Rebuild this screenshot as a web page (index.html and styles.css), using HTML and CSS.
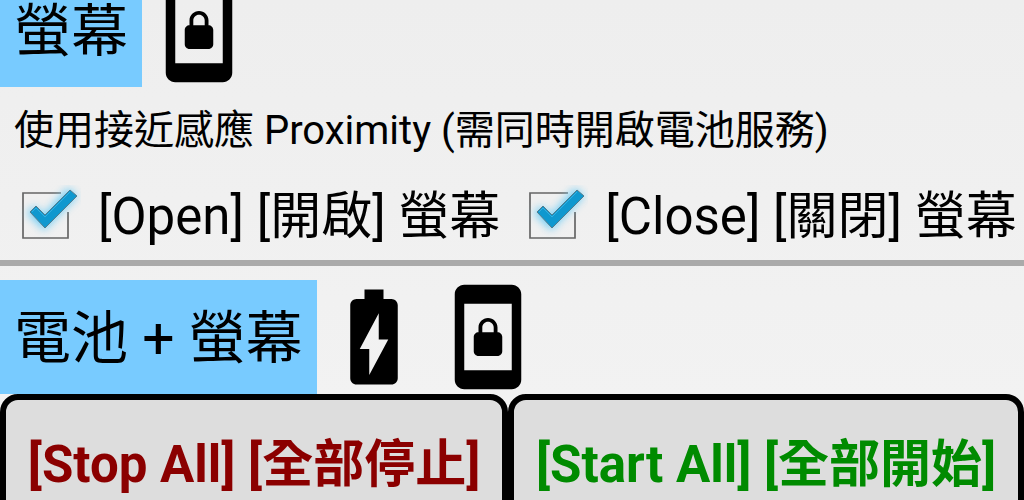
FILE: index.html
```html
<!DOCTYPE html>
<html lang="zh-Hant">
<head>
<meta charset="utf-8">
<meta name="viewport" content="width=device-width, initial-scale=1">
<title>電池 + 螢幕</title>
<link rel="stylesheet" href="styles.css">
</head>
<body>
<svg class="symbols" aria-hidden="true">
  <symbol id="phone-lock" viewBox="0 0 24 24">
    <path d="M17 1H7C5.900 1 5 1.900 5 3v18c0 1.100.9 2 2 2h10c1.100 0 2-.9 2-2V3c0-1.100-.9-2-2-2zm0 18H7V5h10v14z"/>
    <path d="M10 16h4c.55 0 1-.45 1-1v-3c0-.55-.45-1-1-1v-1c0-1.110-.9-2-2-2s-2 .9-2 2v1c-.55 0-1 .45-1 1v3c0 .55.45 1 1 1zm.8-6c0-.66.54-1.200 1.200-1.200s1.200.54 1.200 1.200v1h-2.400v-1z"/>
  </symbol>
  <symbol id="battery" viewBox="0 0 24 24">
    <path d="M15.670 4H14V2h-4v2H8.330C7.600 4 7 4.600 7 5.330v15.330C7 21.400 7.600 22 8.330 22h7.330c.74 0 1.340-.6 1.340-1.330V5.330C17 4.600 16.400 4 15.670 4zM11 20v-5.500H9L13 7v5.500h2L11 20z"/>
  </symbol>
  <symbol id="tick" viewBox="0 0 64 64">
    <path d="M44 8H6v45h45V27" fill="none" stroke="#666" stroke-width="1.700"/>
    <path class="tick-glow" d="M12 28l5-5 10 9L51 5l7 6-31 32z"/>
    <path d="M13 27l6-6 9 9L53 5l7 6-32 32z" fill="#0f98cf" stroke="#557c8c" stroke-width="1"/>
    <path d="M15 27l4-4 9 9L53 7" fill="none" stroke="#35aede" stroke-width="1"/>
  </symbol>
</svg>
<main class="page">
  <header class="section-head">
    <h2 class="title">螢幕</h2>
    <svg class="icon" aria-hidden="true"><use href="#phone-lock"/></svg>
  </header>
  <p class="note">使用接近感應 Proximity (需同時開啟電池服務)</p>
  <div class="options">
    <label class="option">
      <span class="check"><input class="check-input" type="checkbox" checked><svg class="check-mark" aria-hidden="true"><use href="#tick"/></svg></span>
      <span>[Open] [開啟] 螢幕</span>
    </label>
    <label class="option">
      <span class="check"><input class="check-input" type="checkbox" checked><svg class="check-mark" aria-hidden="true"><use href="#tick"/></svg></span>
      <span>[Close] [關閉] 螢幕</span>
    </label>
  </div>
  <hr class="divider">
  <section>
    <header class="section-head">
      <h2 class="title">電池 + 螢幕</h2>
      <svg class="icon" aria-hidden="true"><use href="#battery"/></svg>
      <svg class="icon" aria-hidden="true"><use href="#phone-lock"/></svg>
    </header>
    <div class="actions">
      <button class="action action-stop" type="button">[Stop All] [全部停止]</button>
      <button class="action action-start" type="button">[Start All] [全部開始]</button>
    </div>
  </section>
</main>
</body>
</html>
```

FILE: styles.css
```css
* {
  box-sizing: border-box;
}

body {
  margin: 0;
  overflow: hidden;
  background: linear-gradient(#eee, #f3f3f3);
  background-attachment: fixed;
  color: #000;
  font-family: Roboto, "Noto Sans CJK TC", sans-serif;
}

.symbols {
  display: none;
}

/* The list is scrolled part of the way through its first heading. */
.page {
  margin-top: -27px;
}

.section-head {
  display: flex;
  align-items: center;
}

.title {
  margin: 0;
  padding: 4px 14px 0;
  background: #78cbff;
  font-size: 57px;
  font-weight: 400;
  line-height: 110px;
  white-space: nowrap;
}

.icon {
  width: 114px;
  height: 114px;
}

.note {
  margin: 0;
  padding: 14px 14px 18px;
  font-size: 40px;
  line-height: 60px;
  white-space: nowrap;
}

.options {
  display: flex;
  gap: 7px;
  padding-bottom: 5px;
}

.option {
  display: flex;
  align-items: center;
  font-size: 51px;
  line-height: 76px;
  white-space: nowrap;
}

.check {
  display: grid;
  margin: 0 17px;
}

.check-input,
.check-mark {
  grid-area: 1 / 1;
  width: 64px;
  height: 64px;
  margin: 0;
}

.check-input {
  appearance: none;
}

.check-mark {
  overflow: visible;
  pointer-events: none;
}

.tick-glow {
  fill: #6fcdf5;
  stroke: #6fcdf5;
  stroke-width: 3px;
  filter: blur(4px);
}

.divider {
  height: 6px;
  margin: 0 0 14px;
  border: 0;
  background: #aaa;
}

.actions {
  display: flex;
}

.action {
  flex: 1 1 auto;
  padding: 32px 16px;
  border: 6px solid #000;
  border-radius: 18px;
  background: #ddd;
  font: inherit;
  font-size: 51px;
  font-weight: 700;
  line-height: 66px;
  white-space: nowrap;
}

.action-stop {
  color: #8b0000;
}

.action-start {
  color: #008b00;
}
```
